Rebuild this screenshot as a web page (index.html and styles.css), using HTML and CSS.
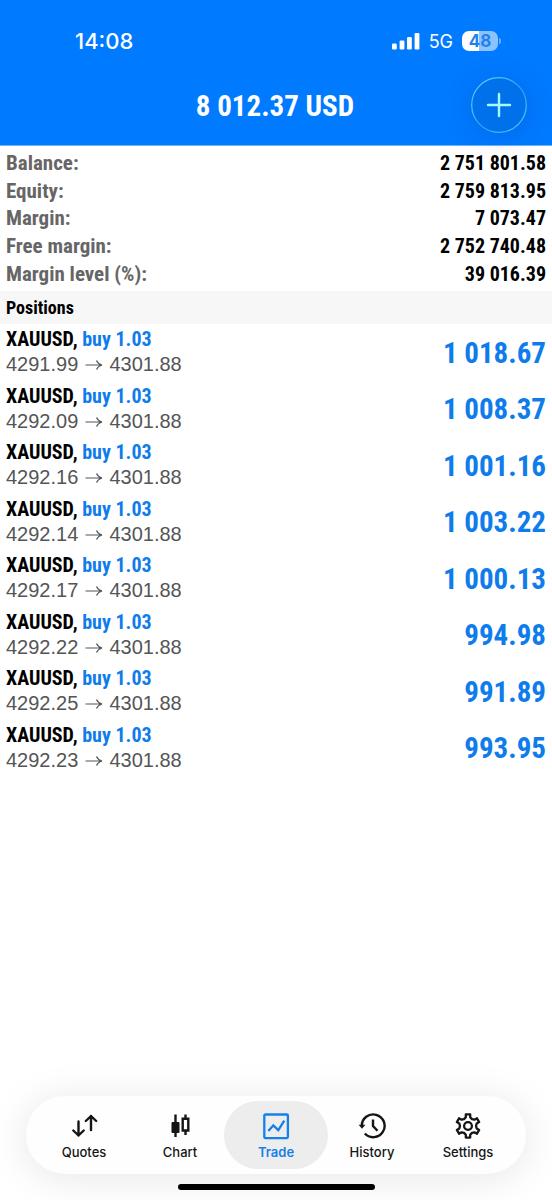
FILE: index.html
```html
<!DOCTYPE html>
<html lang="en">
<head>
<meta charset="utf-8">
<meta name="viewport" content="width=device-width, initial-scale=1">
<title>Trade</title>
<link rel="stylesheet" href="styles.css">
</head>
<body>
<div class="app">
  <header class="header">
    <div class="status">
      <time class="clock">14:08</time>
      <div class="status-right">
        <svg class="signal" viewBox="0 0 28 18" aria-label="Signal"><rect x="0" y="11.500" width="4.800" height="6" rx="1.200"/><rect x="7.600" y="8.500" width="4.800" height="9" rx="1.200"/><rect x="15" y="5" width="4.800" height="12.500" rx="1.200"/><rect x="22.600" y="1" width="4.800" height="16.500" rx="1.200"/></svg>
        <span class="network">5G</span>
        <span class="battery"><span class="battery-level">48</span><span class="battery-tip"></span></span>
      </div>
    </div>
    <div class="title-bar">
      <h1 class="title">8 012.37 USD</h1>
      <button class="add" type="button" aria-label="New order">
        <svg class="add-icon" viewBox="0 0 56 56"><defs><linearGradient id="ring" x1="0" y1="0" x2="1" y2="1"><stop offset="0" stop-color="#5fd2ff"/><stop offset=".3" stop-color="#48c0ff"/><stop offset=".55" stop-color="#2fa0fa"/><stop offset="1" stop-color="#5fd2ff"/></linearGradient></defs><circle cx="28" cy="28" r="27.300" fill="none" stroke="url(#ring)" stroke-width="1.200"/><path d="M28 17v22M17 28h22" stroke="#a5fbff" stroke-width="2.400" stroke-linecap="round"/></svg>
      </button>
    </div>
  </header>
  <main>
    <dl class="summary">
      <div class="summary-row"><dt>Balance:</dt><dd>2 751 801.58</dd></div>
      <div class="summary-row"><dt>Equity:</dt><dd>2 759 813.95</dd></div>
      <div class="summary-row"><dt>Margin:</dt><dd>7 073.47</dd></div>
      <div class="summary-row"><dt>Free margin:</dt><dd>2 752 740.48</dd></div>
      <div class="summary-row"><dt>Margin level (%):</dt><dd>39 016.39</dd></div>
    </dl>
    <h2 class="section">Positions</h2>
    <svg width="0" height="0" class="symbols" aria-hidden="true"><symbol id="arrow" viewBox="0 0 18 12"><path d="M.5 6h16.500M11.500 1.500Q13 5 17 6Q13 7 11.500 10.500" fill="none" stroke="currentColor" stroke-width="1.200"/></symbol></svg>
    <ul class="positions">
      <li class="position"><div><div class="symbol">XAUUSD, <span class="side">buy 1.03</span></div><div class="prices">4291.99 <svg class="arrow"><use href="#arrow"/></svg> 4301.88</div></div><div class="profit">1 018.67</div></li>
      <li class="position"><div><div class="symbol">XAUUSD, <span class="side">buy 1.03</span></div><div class="prices">4292.09 <svg class="arrow"><use href="#arrow"/></svg> 4301.88</div></div><div class="profit">1 008.37</div></li>
      <li class="position"><div><div class="symbol">XAUUSD, <span class="side">buy 1.03</span></div><div class="prices">4292.16 <svg class="arrow"><use href="#arrow"/></svg> 4301.88</div></div><div class="profit">1 001.16</div></li>
      <li class="position"><div><div class="symbol">XAUUSD, <span class="side">buy 1.03</span></div><div class="prices">4292.14 <svg class="arrow"><use href="#arrow"/></svg> 4301.88</div></div><div class="profit">1 003.22</div></li>
      <li class="position"><div><div class="symbol">XAUUSD, <span class="side">buy 1.03</span></div><div class="prices">4292.17 <svg class="arrow"><use href="#arrow"/></svg> 4301.88</div></div><div class="profit">1 000.13</div></li>
      <li class="position"><div><div class="symbol">XAUUSD, <span class="side">buy 1.03</span></div><div class="prices">4292.22 <svg class="arrow"><use href="#arrow"/></svg> 4301.88</div></div><div class="profit">994.98</div></li>
      <li class="position"><div><div class="symbol">XAUUSD, <span class="side">buy 1.03</span></div><div class="prices">4292.25 <svg class="arrow"><use href="#arrow"/></svg> 4301.88</div></div><div class="profit">991.89</div></li>
      <li class="position"><div><div class="symbol">XAUUSD, <span class="side">buy 1.03</span></div><div class="prices">4292.23 <svg class="arrow"><use href="#arrow"/></svg> 4301.88</div></div><div class="profit">993.95</div></li>
    </ul>
  </main>
  <footer class="footer">
    <nav class="tabs">
      <a class="tab" href="#quotes"><svg class="tab-icon" viewBox="0 0 28 28"><path d="M8.500 9.500v14M3.300 18.500l5.200 5 5.200-5M21 18V4M15.800 9l5.200-5 5.200 5" fill="none" stroke="currentColor" stroke-width="2.400" stroke-linecap="round" stroke-linejoin="round"/></svg>Quotes</a>
      <a class="tab" href="#chart"><svg class="tab-icon" viewBox="0 0 28 28"><path d="M9.500 2.500v22.500M19.500 2.500v4M19.500 19v4" stroke="currentColor" stroke-width="2.400"/><path d="M6 10.500h7v10H6z" fill="currentColor" stroke="currentColor"/><path d="M16.700 6.700h5.600v11.800h-5.600z" fill="none" stroke="currentColor" stroke-width="2.400"/></svg>Chart</a>
      <a class="tab tab-active" href="#trade" aria-current="page"><svg class="tab-icon" viewBox="0 0 28 28"><rect x="2.300" y="2.500" width="23.600" height="23.600" rx="1" fill="none" stroke="currentColor" stroke-width="2.300"/><path d="M6.300 19l5-5.500 5 4.700 6-9.500" fill="none" stroke="currentColor" stroke-width="2.300"/></svg>Trade</a>
      <a class="tab" href="#history"><svg class="tab-icon" viewBox="0 0 28 28"><path d="M3.800 14A11.400 11.400 0 1 1 6.800 21.500M15 7.500v6.500l4.500 4.800" fill="none" stroke="currentColor" stroke-width="2.400"/><path d="M.6 12.700h6.800l-3.400 4z" fill="currentColor"/></svg>History</a>
      <a class="tab" href="#settings"><svg class="tab-icon" viewBox="0 0 28 28"><g fill="none" stroke="currentColor" stroke-width="2.300" stroke-linejoin="round"><path d="M11.800 2.400h4.400v2.800l1.800 1.900 2.500.6 2.450-1.400 2.200 3.800-2.450 1.400-.7 2.500.7 2.500 2.450 1.400-2.200 3.800-2.450-1.400-2.500.6-1.800 1.900v2.800h-4.400v-2.800L10 20.900l-2.500-.6-2.450 1.400-2.200-3.800 2.450-1.400L6 14l-.7-2.500-2.450-1.400 2.200-3.800L7.500 7.700l2.500-.6 1.800-1.900z"/><circle cx="14" cy="14" r="3.900"/></g></svg>Settings</a>
    </nav>
    <div class="home-indicator"></div>
  </footer>
</div>
</body>
</html>
```
FILE: styles.css
```css
* { box-sizing: border-box; }
body {
  margin: 0;
  background: #fff;
  color: #000;
  font-family: "Liberation Sans Narrow", "Arial Narrow", "Roboto Condensed", "Liberation Sans", sans-serif;
}
.app { display: flex; flex-direction: column; min-height: 100vh; overflow: hidden; }
.header {
  background: #007aff;
  border-bottom: 1px solid #6cb2f8;
  color: #fff;
  padding: 24px 25px 12px 75px;
}
.status {
  display: flex;
  justify-content: space-between;
  align-items: center;
  height: 34px;
  padding-right: 26px;
  font-family: Inter, sans-serif;
}
.clock { font-size: 22px; font-weight: 500; }
.status-right { display: flex; align-items: center; gap: 9px; }
.signal { width: 28px; height: 18px; fill: #fff; }
.network { font-size: 18px; }
.battery { display: flex; align-items: center; gap: 1px; }
.battery-level {
  width: 36px;
  border-radius: 7px;
  background: linear-gradient(90deg, #fff 48%, #8cc3ff 48%);
  color: #2180ec;
  font-size: 17px;
  font-weight: 700;
  line-height: 20px;
  text-align: center;
}
.battery-tip { width: 2px; height: 6px; border-radius: 0 2px 2px 0; background: #66b0ff; }
.title-bar {
  display: grid;
  grid-template-columns: 1fr auto;
  align-items: center;
  margin-top: 19px;
}
.title { margin: 0; padding: 2px 0 0 4px; font-size: 29px; line-height: 36px; text-align: center; }
.add {
  width: 56px;
  height: 56px;
  padding: 0;
  border: 0;
  border-radius: 50%;
  background: #0071ea;
  box-shadow: 0 4px 28px rgba(0, 50, 140, 0.2);
}
.add-icon { display: block; width: 56px; height: 56px; }
.summary {
  display: grid;
  grid-auto-rows: 1fr;
  min-height: 138px;
  margin: 4px 0 3px;
  padding: 0 6px;
  font-size: 20px;
  font-weight: 700;
  line-height: 27px;
}
.summary-row { display: flex; justify-content: space-between; align-items: center; }
.summary-row dt { color: #666; font-size: 21px; }
.summary-row dd { margin: 0; }
.section {
  margin: 0;
  padding: 1px 6px 0;
  background: #f7f7f7;
  font-size: 18px;
  line-height: 32px;
}
.symbols { display: block; }
.positions {
  display: grid;
  grid-auto-rows: 1fr;
  min-height: 452px;
  margin: 0;
  padding: 0 6px;
  list-style: none;
}
.position { display: flex; justify-content: space-between; align-items: center; }
.symbol { font-size: 20px; font-weight: 700; line-height: 28px; }
.side { color: #0f7cec; }
.prices { padding-bottom: 4px; color: #555; font-family: "Liberation Sans", sans-serif; font-size: 20px; line-height: 22px; }
.arrow { width: 18px; height: 12px; margin: 0 1px; }
.profit { padding-top: 1px; color: #0f7cec; font-size: 29px; font-weight: 700; line-height: 36px; }
.footer { margin-top: auto; padding: 0 26px 10px; }
.tabs {
  display: grid;
  grid-template-columns: repeat(5, 1fr);
  padding: 5px 10px;
  border-radius: 39px;
  background: #fefefe;
  box-shadow: 0 4px 40px rgba(0, 0, 0, 0.1);
}
.tab {
  display: flex;
  flex-direction: column;
  align-items: center;
  gap: 4px;
  margin: 0 -4px;
  padding: 11px 0 8px;
  border-radius: 34px;
  color: #151515;
  font-family: Inter, sans-serif;
  font-size: 13px;
  font-weight: 500;
  line-height: 17px;
  text-decoration: none;
}
.tab-icon { width: 28px; height: 28px; }
.tab-active { background: #ededed; color: #1580e8; font-weight: 600; }
.home-indicator { width: 197px; height: 6px; margin: 10px auto 0; border-radius: 3px; background: #000; }
```
